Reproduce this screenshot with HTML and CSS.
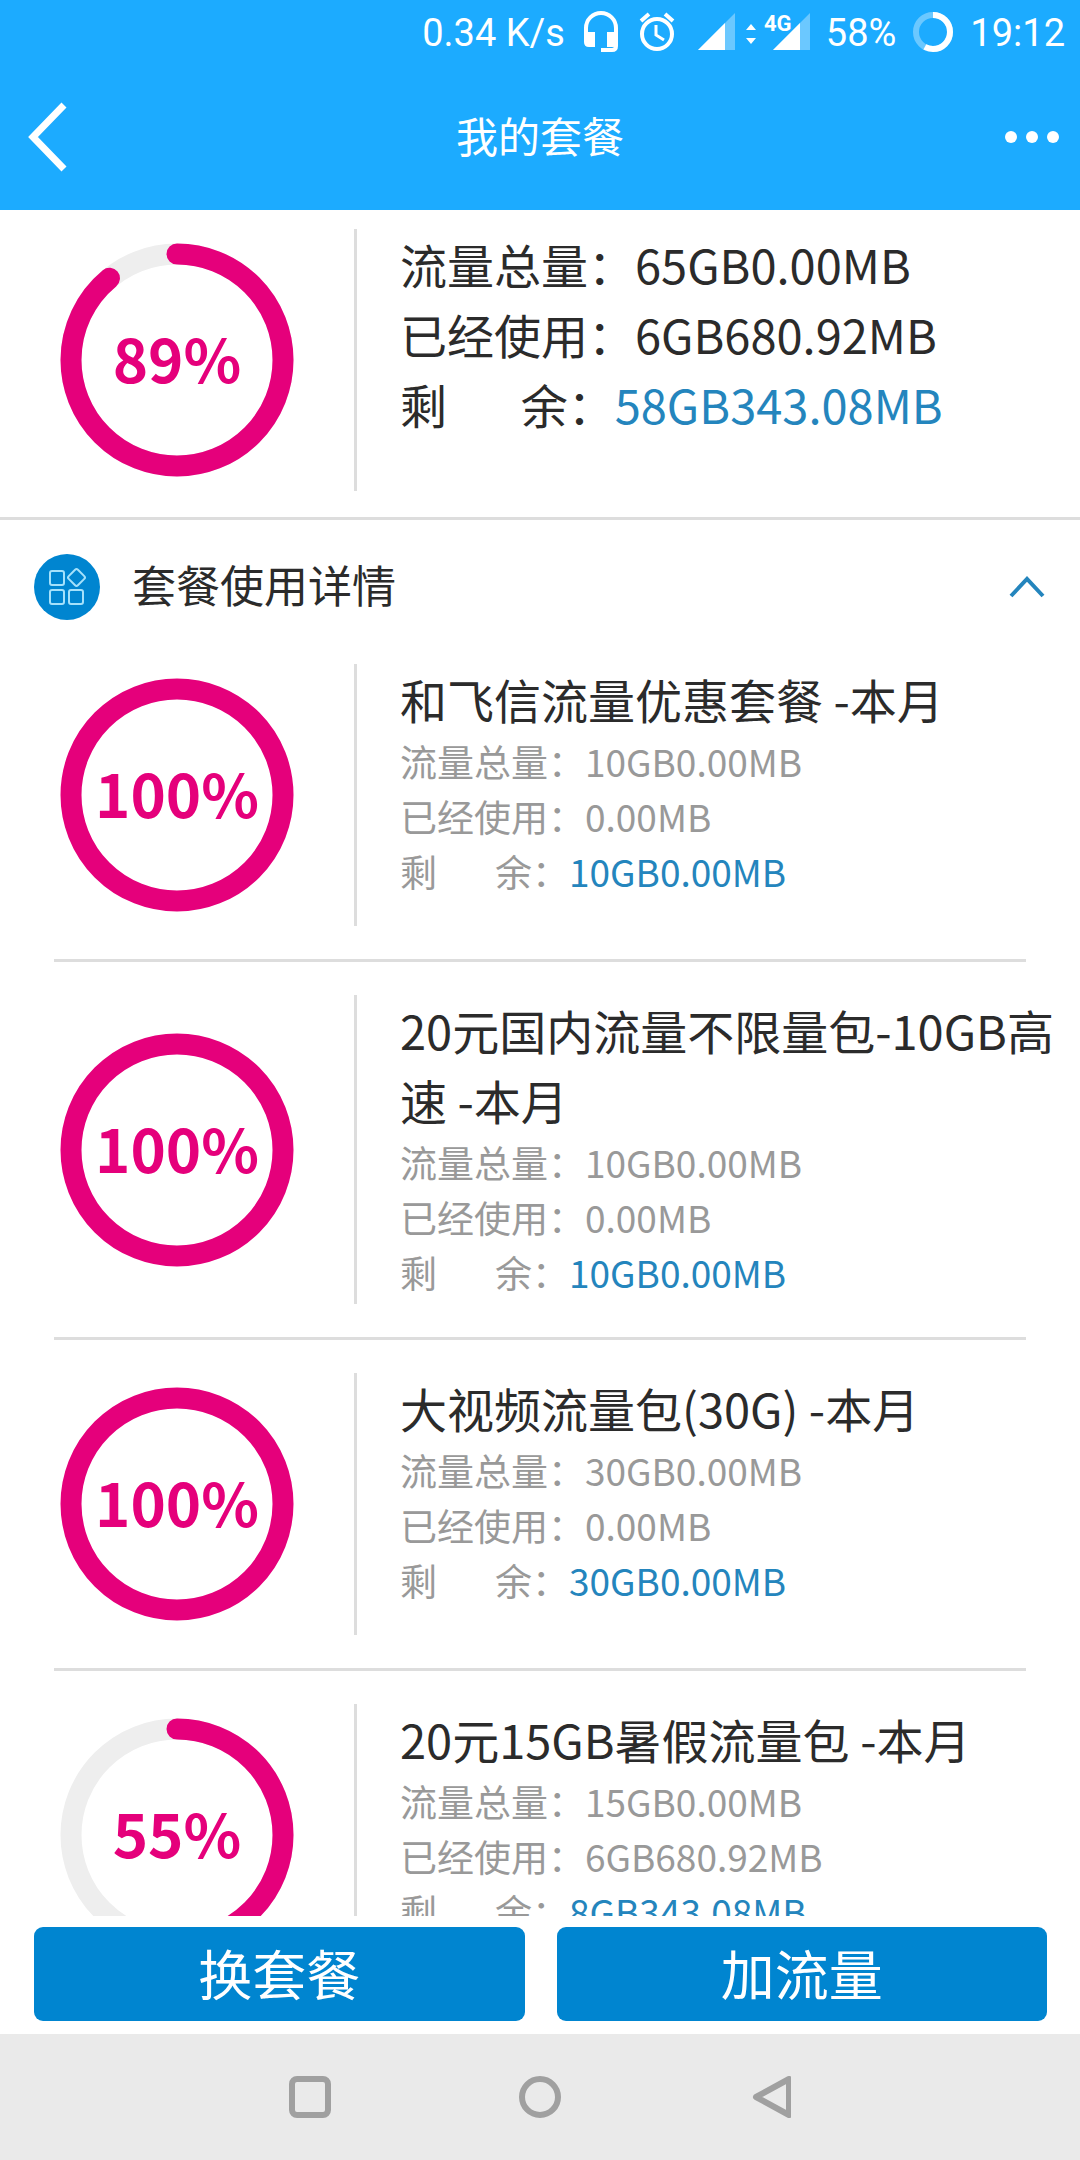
FILE: index.html
```html
<!DOCTYPE html>
<html lang="zh-CN">
<head>
<meta charset="utf-8">
<meta name="viewport" content="width=device-width, initial-scale=1">
<title>我的套餐</title>
<link rel="stylesheet" href="styles.css">
</head>
<body>
<header class="top">
  <div class="status">
    <span>0.34 K/s</span>
    <svg width="40" height="42" viewBox="-2 0 40 42" aria-hidden="true">
      <path d="M3 24V17a15 15 0 0 1 30 0v18q0 4-4 4H18" fill="none" stroke="#fff" stroke-width="4"/>
      <path d="M1 21h11v15H6q-5 0-5-5zM24 21h11v10q0 5-5 5h-6z" fill="#fff"/>
    </svg>
    <svg width="40" height="40" viewBox="-2 0 40 40" fill="none" stroke="#fff" aria-hidden="true">
      <circle cx="18" cy="22" r="15" stroke-width="4"/>
      <path d="M2 9l8-7M34 9l-8-7" stroke-width="4"/>
      <path d="M17 13v10l8 5" stroke-width="3"/>
    </svg>
    <svg width="117" height="40" viewBox="-5 0 117 40" fill="#fff" aria-hidden="true">
      <path d="M0 38L37 1v37z" opacity=".35"/>
      <path d="M0 38l27-27v27z"/>
      <path d="M53 12l5 6H48zM53 32l5-6H48z"/>
      <path d="M75 38L112 1v37z" opacity=".35"/>
      <path d="M75 38l27-27v27z"/>
      <text class="network" x="66" y="19">4G</text>
    </svg>
    <span>58%</span>
    <svg width="42" height="42" viewBox="0 0 42 42" fill="none" stroke="#fff" stroke-width="6" aria-hidden="true">
      <circle cx="21" cy="21" r="17" opacity=".35"/>
      <circle cx="21" cy="21" r="17" pathLength="100" stroke-dasharray="58 100" transform="rotate(-90 21 21)"/>
    </svg>
    <time>19:12</time>
  </div>
  <div class="titlebar">
    <button class="icon-button" aria-label="返回">
      <svg width="49" height="70" viewBox="-5 0 49 70"><path d="M39 3L8 35l31 32" fill="none" stroke="#fff" stroke-width="7"/></svg>
    </button>
    <h1 class="title">我的套餐</h1>
    <button class="icon-button icon-button-end" aria-label="更多">
      <svg width="56" height="14" viewBox="0 0 56 14" fill="#fff"><circle cx="7" cy="7" r="6"/><circle cx="28" cy="7" r="6"/><circle cx="49" cy="7" r="6"/></svg>
    </button>
  </div>
</header>

<main class="content">
  <section class="summary plan">
    <div class="gauge">
      <svg class="ring" viewBox="0 0 234 234"><circle class="track" cx="117" cy="117" r="106"/><circle class="bar" cx="117" cy="117" r="106" pathLength="100" stroke-dasharray="89 100"/></svg>
      <span class="percent">89%</span>
    </div>
    <dl class="info usage">
      <div><dt>流量总量：</dt><dd>65GB0.00MB</dd></div>
      <div><dt>已经使用：</dt><dd>6GB680.92MB</dd></div>
      <div><dt>剩&nbsp;&nbsp;&nbsp;&nbsp;&nbsp;&nbsp;&nbsp;余：</dt><dd class="left">58GB343.08MB</dd></div>
    </dl>
  </section>

  <section class="details">
    <h2 class="details-heading">
      <button class="details-toggle" aria-expanded="true">
        <svg width="66" height="66" viewBox="0 0 66 66" aria-hidden="true">
          <circle cx="33" cy="33" r="33" fill="#0085d0"/>
          <g fill="none" stroke="#a5e1fb" stroke-width="2">
            <rect x="16" y="17" width="14" height="14" rx="2"/>
            <rect x="16" y="36" width="14" height="14" rx="2"/>
            <rect x="35" y="36" width="14" height="14" rx="2"/>
            <rect x="36" y="17" width="13" height="13" rx="2" transform="rotate(45 42.5 23.5)"/>
          </g>
        </svg>
        <span class="details-title">套餐使用详情</span>
        <svg width="36" height="24" viewBox="0 0 36 24" aria-hidden="true"><path d="M2 21L18 4l16 17" fill="none" stroke="#2485bd" stroke-width="4"/></svg>
      </button>
    </h2>

    <ul class="plans">
      <li class="plan">
        <div class="gauge">
          <svg class="ring" viewBox="0 0 234 234"><circle class="bar" cx="117" cy="117" r="106"/></svg>
          <span class="percent">100%</span>
        </div>
        <div class="info">
          <h3 class="name">和飞信流量优惠套餐 -本月</h3>
          <dl class="usage">
            <div><dt>流量总量：</dt><dd>10GB0.00MB</dd></div>
            <div><dt>已经使用：</dt><dd>0.00MB</dd></div>
            <div><dt>剩&nbsp;&nbsp;&nbsp;&nbsp;&nbsp;&nbsp;&nbsp;余：</dt><dd class="left">10GB0.00MB</dd></div>
          </dl>
        </div>
      </li>
      <li class="plan">
        <div class="gauge">
          <svg class="ring" viewBox="0 0 234 234"><circle class="bar" cx="117" cy="117" r="106"/></svg>
          <span class="percent">100%</span>
        </div>
        <div class="info">
          <h3 class="name">20元国内流量不限量包-10GB高速 -本月</h3>
          <dl class="usage">
            <div><dt>流量总量：</dt><dd>10GB0.00MB</dd></div>
            <div><dt>已经使用：</dt><dd>0.00MB</dd></div>
            <div><dt>剩&nbsp;&nbsp;&nbsp;&nbsp;&nbsp;&nbsp;&nbsp;余：</dt><dd class="left">10GB0.00MB</dd></div>
          </dl>
        </div>
      </li>
      <li class="plan">
        <div class="gauge">
          <svg class="ring" viewBox="0 0 234 234"><circle class="bar" cx="117" cy="117" r="106"/></svg>
          <span class="percent">100%</span>
        </div>
        <div class="info">
          <h3 class="name">大视频流量包(30G) -本月</h3>
          <dl class="usage">
            <div><dt>流量总量：</dt><dd>30GB0.00MB</dd></div>
            <div><dt>已经使用：</dt><dd>0.00MB</dd></div>
            <div><dt>剩&nbsp;&nbsp;&nbsp;&nbsp;&nbsp;&nbsp;&nbsp;余：</dt><dd class="left">30GB0.00MB</dd></div>
          </dl>
        </div>
      </li>
      <li class="plan">
        <div class="gauge">
          <svg class="ring" viewBox="0 0 234 234"><circle class="track" cx="117" cy="117" r="106"/><circle class="bar" cx="117" cy="117" r="106" pathLength="100" stroke-dasharray="55 100"/></svg>
          <span class="percent">55%</span>
        </div>
        <div class="info">
          <h3 class="name">20元15GB暑假流量包 -本月</h3>
          <dl class="usage">
            <div><dt>流量总量：</dt><dd>15GB0.00MB</dd></div>
            <div><dt>已经使用：</dt><dd>6GB680.92MB</dd></div>
            <div><dt>剩&nbsp;&nbsp;&nbsp;&nbsp;&nbsp;&nbsp;&nbsp;余：</dt><dd class="left">8GB343.08MB</dd></div>
          </dl>
        </div>
      </li>
    </ul>
  </section>
</main>

<footer class="actions">
  <button class="action">换套餐</button>
  <button class="action">加流量</button>
</footer>

<nav class="system-nav" aria-label="系统导航">
  <button class="nav-button" aria-label="最近任务"><svg width="42" height="42" viewBox="0 0 42 42"><rect x="3" y="3" width="36" height="36" rx="5"/></svg></button>
  <button class="nav-button" aria-label="主屏幕"><svg width="42" height="42" viewBox="0 0 42 42"><circle cx="21" cy="21" r="18"/></svg></button>
  <button class="nav-button" aria-label="返回"><svg width="42" height="42" viewBox="0 0 42 42"><path d="M40 3v36L7 21z"/></svg></button>
</nav>
</body>
</html>
```

FILE: styles.css
```css
* {
  box-sizing: border-box;
  margin: 0;
  padding: 0;
}

body {
  display: flex;
  flex-direction: column;
  height: 100vh;
  background: #fff;
  color: #2b2b2b;
  font-family: "Noto Sans CJK SC", sans-serif;
}

button {
  border: 0;
  background: none;
  color: inherit;
  font: inherit;
}

svg {
  display: block;
  flex: none;
}

/* Header */
.top {
  flex: none;
  background: #1cabff;
  color: #fff;
}

.status {
  display: flex;
  align-items: center;
  justify-content: flex-end;
  gap: 16px;
  height: 64px;
  padding-right: 15px;
  font: 38px/64px Roboto, sans-serif;
}

.status span,
.status time {
  padding-top: 2px;
}

.network {
  font: bold 22px Roboto, sans-serif;
}

.titlebar {
  display: grid;
  grid-template-columns: 1fr auto 1fr;
  align-items: center;
  height: 146px;
  padding: 0 20px;
}

.title {
  padding-bottom: 6px;
  font-size: 42px;
  font-weight: 400;
}

.icon-button {
  justify-self: start;
}

.icon-button-end {
  justify-self: end;
}

/* Scrolling area */
.content {
  flex: 1;
  min-height: 0;
  overflow: hidden;
}

.plan {
  display: flex;
}

.gauge {
  display: grid;
  flex: none;
  place-items: center;
  width: 354px;
}

.ring {
  grid-area: 1 / 1;
  width: 234px;
  fill: none;
  stroke-width: 21px;
  stroke-linecap: round;
}

.track {
  stroke: #eee;
}

.bar {
  stroke: #e5007b;
  transform: rotate(-90deg);
  transform-origin: center;
}

.percent {
  grid-area: 1 / 1;
  padding-bottom: 6px;
  color: #e5007b;
  font-size: 60px;
  font-weight: 700;
  line-height: 70px;
}

.info {
  flex: 1;
  min-height: 262px;
  padding: 0 15px 4px 43px;
  border-left: 3px solid #ddd;
}

.usage {
  color: #999;
  font-size: 37px;
  line-height: 55px;
}

.usage div {
  display: flex;
}

.usage .left {
  color: #2485bd;
}

.summary {
  padding: 19px 0 26px;
  border-bottom: 3px solid #ddd;
}

.summary .usage {
  color: #2b2b2b;
  font-size: 47px;
  line-height: 70px;
}

/* Plan details */
.details-heading {
  font-size: 44px;
  font-weight: 400;
}

.details-toggle {
  display: flex;
  align-items: center;
  gap: 32px;
  width: 100%;
  height: 134px;
  padding: 0 35px 0 34px;
  text-align: left;
}

.details-title {
  flex: 1;
  padding-bottom: 6px;
}

.plans {
  padding-top: 10px;
  list-style: none;
}

.plans .plan {
  flex-wrap: wrap;
}

.plans .plan:not(:last-child)::after {
  flex-basis: 100%;
  height: 3px;
  margin: 33px 54px;
  background: #ddd;
  content: "";
}

.name {
  font-size: 47px;
  font-weight: 400;
  line-height: 70px;
}

/* Bottom bars */
.actions {
  display: flex;
  flex: none;
  gap: 32px;
  padding: 11px 33px 13px 34px;
}

.action {
  flex: 1;
  height: 94px;
  padding-bottom: 2px;
  border-radius: 9px;
  background: #0085d0;
  color: #fff;
  font-size: 54px;
  line-height: 92px;
}

.system-nav {
  display: flex;
  flex: none;
  align-items: center;
  justify-content: center;
  gap: 188px;
  height: 126px;
  background: #eaeaea;
}

.nav-button svg {
  fill: none;
  stroke: #a0a0a0;
  stroke-width: 6px;
  stroke-linejoin: round;
}
```
